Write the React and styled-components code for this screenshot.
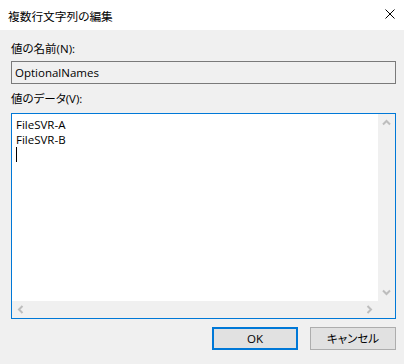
import React from "react";
import styled, { createGlobalStyle } from "styled-components";

const GlobalStyle = createGlobalStyle`
  html, body {
    margin: 0;
    padding: 0;
    background: #f0f0f0;
  }
  body {
    font-family: "Open Sans", "Noto Sans CJK JP", sans-serif;
    font-size: 11.5px;
    color: #000;
    font-feature-settings: "palt";
  }
`;

const Window = styled.div`
  width: 404px;
  height: 364px;
  display: flex;
  flex-direction: column;
  background: #f0f0f0;
  overflow: hidden;
`;

const TitleBar = styled.div`
  height: 30px;
  flex: none;
  background: #ffffff;
  display: flex;
  align-items: center;
  justify-content: space-between;
  padding: 0 9px 0 8px;
  font-size: 11.7px;
`;

const Title = styled.span`
  line-height: 16px;
  margin-top: 1px;
`;

const CloseIcon = styled.svg`
  width: 10px;
  height: 10px;
  align-self: flex-start;
  margin-top: 9px;
  display: block;
`;

const Body = styled.div`
  display: flex;
  flex-direction: column;
  padding: 11px 8px 0 11px;
`;

const Label = styled.div`
  line-height: 16px;
  height: 16px;
  margin-top: ${(p) => p.$gap || 0}px;
`;

const Field = styled.div`
  margin-top: 4px;
  height: 23px;
  box-sizing: border-box;
  border: 1px solid #7a7a7a;
  background: #f0f0f0;
  padding: 0 3px;
  display: flex;
  align-items: center;
  line-height: 16px;
`;

const Editor = styled.div`
  margin-top: 6px;
  height: 206px;
  box-sizing: border-box;
  border: 1px solid #0078d7;
  background: #ffffff;
  display: grid;
  grid-template-columns: 1fr 17px;
  grid-template-rows: 1fr 17px;
`;

const EditorText = styled.div`
  padding: 3px 4px;
  line-height: 15px;
`;

const Line = styled.div`
  height: 15px;
  white-space: pre;
`;

const Caret = styled.div`
  width: 1px;
  height: 15px;
  background: #000;
`;

const VScroll = styled.div`
  background: #f0f0f0;
  display: flex;
  flex-direction: column;
  justify-content: space-between;
`;

const HScroll = styled.div`
  background: #f0f0f0;
  display: flex;
  justify-content: space-between;
`;

const Corner = styled.div`
  background: #f0f0f0;
`;

const ArrowSvg = styled.svg`
  width: 17px;
  height: 17px;
  display: block;
`;

const Arrow = ({ dir }) => {
  const pts = {
    up: "5,10.5 8.5,7 12,10.5",
    down: "5,6.5 8.5,10 12,6.5",
    left: "10.5,5 7,8.5 10.5,12",
    right: "6.5,5 10,8.5 6.5,12",
  }[dir];
  return (
    <ArrowSvg viewBox="0 0 17 17">
      <polyline points={pts} fill="none" stroke="#bdbdbd" strokeWidth="2" />
    </ArrowSvg>
  );
};

const ButtonRow = styled.div`
  margin-top: 8px;
  display: flex;
  justify-content: flex-end;
  gap: 12px;
`;

const Button = styled.div`
  width: 86px;
  height: 23px;
  box-sizing: border-box;
  background: #e1e1e1;
  border: ${(p) => (p.$default ? "2px solid #0078d7" : "1px solid #adadad")};
  display: flex;
  align-items: center;
  justify-content: center;
  line-height: 16px;
`;

export default function App() {
  return (
    <>
      <GlobalStyle />
      <Window>
        <TitleBar>
          <Title>複数行文字列の編集</Title>
          <CloseIcon viewBox="0 0 10 10">
            <path d="M0.5 0.5 L9.5 9.5 M9.5 0.5 L0.5 9.5" stroke="#000" strokeWidth="1" fill="none" />
          </CloseIcon>
        </TitleBar>
        <Body>
          <Label>値の名前(N):</Label>
          <Field>OptionalNames</Field>
          <Label $gap={7}>値のデータ(V):</Label>
          <Editor>
            <EditorText>
              <Line>FileSVR-A</Line>
              <Line>FileSVR-B</Line>
              <Caret />
            </EditorText>
            <VScroll>
              <Arrow dir="up" />
              <Arrow dir="down" />
            </VScroll>
            <HScroll>
              <Arrow dir="left" />
              <Arrow dir="right" />
            </HScroll>
            <Corner />
          </Editor>
          <ButtonRow>
            <Button $default>OK</Button>
            <Button>キャンセル</Button>
          </ButtonRow>
        </Body>
      </Window>
    </>
  );
}
